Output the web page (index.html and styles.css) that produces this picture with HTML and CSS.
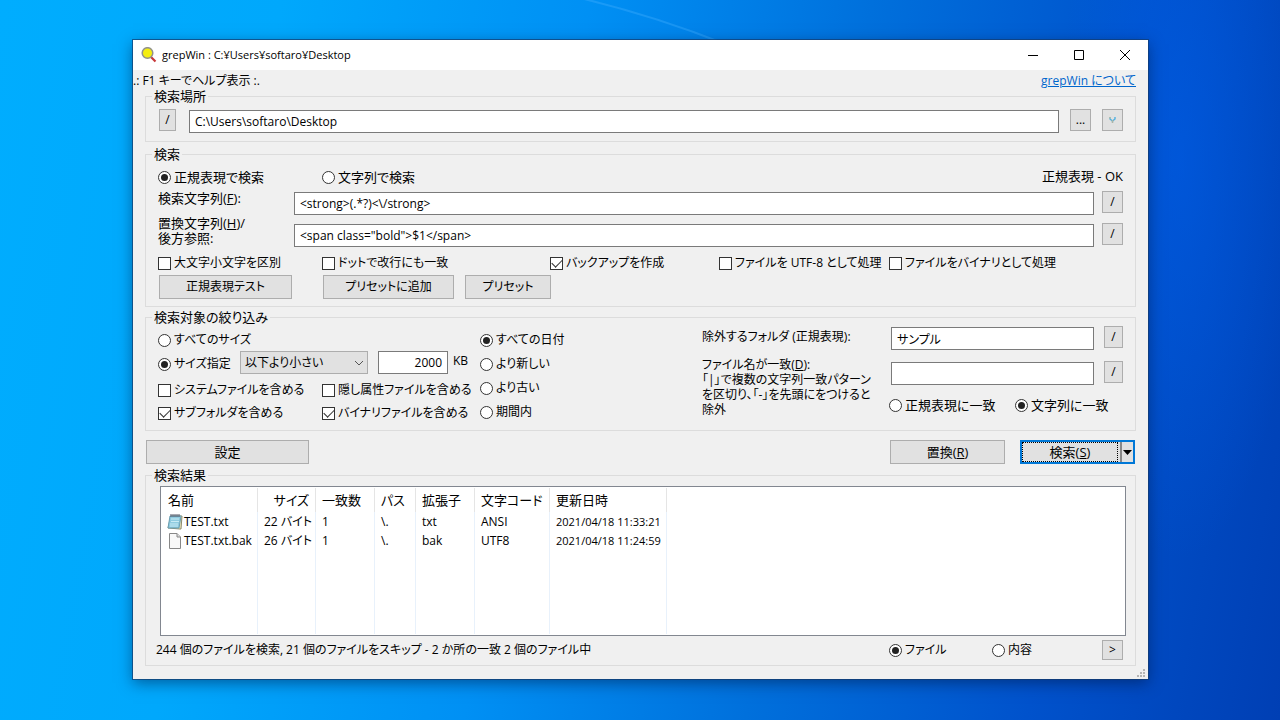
FILE: index.html
```html
<!DOCTYPE html>
<html lang="ja">
<head>
<meta charset="utf-8">
<title>grepWin</title>
<link rel="stylesheet" href="styles.css">
</head>
<body class="desktop">
<svg class="ray" viewBox="0 0 160 50" aria-hidden="true"><path d="M5 -2 Q80 16 150 44" fill="none" stroke="#49b2ff" stroke-opacity=".35" stroke-width="2"/></svg>
<main class="window">
  <header class="titlebar">
    <svg class="app-icon" viewBox="0 0 16 16" aria-hidden="true">
      <path d="M10 10 L14.500 14.500" stroke="#c8393b" stroke-width="2.2"/>
      <circle cx="6.500" cy="6" r="5.300" fill="#f4ee10" stroke="#92928a" stroke-width="1.5"/>
    </svg>
    <h1 class="title">grepWin : C:¥Users¥softaro¥Desktop</h1>
    <button class="caption-btn" type="button" aria-label="最小化"><svg viewBox="0 0 12 12"><path d="M1 6.500H11"/></svg></button>
    <button class="caption-btn" type="button" aria-label="最大化"><svg viewBox="0 0 12 12"><path d="M1.500 1.500H10.500V10.500H1.500Z"/></svg></button>
    <button class="caption-btn" type="button" aria-label="閉じる"><svg viewBox="0 0 12 12"><path d="M1 1L11 11M11 1L1 11"/></svg></button>
  </header>
  <div class="content">
    <div class="help-row"><span>.: F1 キーでヘルプ表示 :.</span><a class="about" href="#about">grepWin について</a></div>

    <fieldset class="group">
      <legend>検索場所</legend>
      <div class="path-row">
        <button class="btn btn-slash" type="button">/</button>
        <input class="text grow" type="text" aria-label="検索場所" value="C:\Users\softaro\Desktop">
        <button class="btn btn-small" type="button">...</button>
        <button class="btn btn-small" type="button" aria-label="履歴"><svg class="fork" viewBox="0 0 7 8"><path d="M1 1V3L3.500 5L6 3V1" fill="none" stroke="#4fb0e0" stroke-width="1.4"/><path d="M3.500 4V7" stroke="#a9b5a9" stroke-width="1.6"/><path d="M1 1V2.500" stroke="#e0b878" stroke-width="1"/></svg></button>
      </div>
    </fieldset>

    <fieldset class="group group-search">
      <legend>検索</legend>
      <div class="mode-row">
        <label class="option"><input type="radio" name="mode" checked>正規表現で検索</label>
        <label class="option"><input type="radio" name="mode">文字列で検索</label>
        <span class="state">正規表現 - OK</span>
      </div>
      <div class="field-row">
        <label class="field-label" for="find">検索文字列(<u>F</u>):</label>
        <input class="text grow" id="find" type="text" value="&lt;strong&gt;(.*?)&lt;\/strong&gt;">
        <button class="btn btn-small" type="button">/</button>
      </div>
      <div class="field-row field-row-tall">
        <label class="field-label" for="repl">置換文字列(<u>H</u>)/<br>後方参照:</label>
        <input class="text grow" id="repl" type="text" value="&lt;span class=&quot;bold&quot;&gt;$1&lt;/span&gt;">
        <button class="btn btn-small" type="button">/</button>
      </div>
      <div class="check-row">
        <label class="option">
          <input type="checkbox">大文字小文字を区別</label>
        <label class="option"><input type="checkbox">ドットで改行にも一致</label>
        <label class="option"><input type="checkbox" checked>バックアップを作成</label>
        <label class="option"><input type="checkbox">ファイルを UTF-8 として処理</label>
        <label class="option"><input type="checkbox">ファイルをバイナリとして処理</label>
      </div>
      <div class="preset-row">
        <button class="btn btn-test" type="button">正規表現テスト</button>
        <button class="btn btn-add" type="button">プリセットに追加</button>
        <button class="btn btn-preset" type="button">プリセット</button>
      </div>
    </fieldset>

    <fieldset class="group group-limit">
      <legend>検索対象の絞り込み</legend>
      <div class="limit">
        <div class="size-col">
          <label class="option"><input type="radio" name="size">すべてのサイズ</label>
          <div class="size-row">
            <label class="option"><input type="radio" name="size" checked>サイズ指定</label>
            <span class="select-box">
              <select class="select" aria-label="サイズ条件"><option>以下より小さい</option></select>
              <svg class="chevron" viewBox="0 0 10 6" aria-hidden="true"><path d="M1 1L5 5L9 1"/></svg>
            </span>
            <input class="text amount" type="text" aria-label="サイズ" value="2000">
            <span class="unit">KB</span>
          </div>
          <div class="include-grid">
            <label class="option"><input type="checkbox">システムファイルを含める</label>
            <label class="option"><input type="checkbox">隠し属性ファイルを含める</label>
            <label class="option"><input type="checkbox" checked>サブフォルダを含める</label>
            <label class="option"><input type="checkbox" checked>バイナリファイルを含める</label>
          </div>
        </div>
        <div class="date-col">
          <label class="option"><input type="radio" name="date" checked>すべての日付</label>
          <label class="option"><input type="radio" name="date">より新しい</label>
          <label class="option"><input type="radio" name="date">より古い</label>
          <label class="option"><input type="radio" name="date">期間内</label>
        </div>
        <div class="pattern-labels">
          <label for="exclude">除外するフォルダ (正規表現):</label>
          <label for="names">ファイル名が一致(<u>D</u>):<br>「|」で複数の文字列一致パターン<br>を区切り、「-」を先頭にをつけると<br>除外</label>
        </div>
        <div class="pattern-fields">
          <div class="pattern-row"><input class="text grow" id="exclude" type="text" value="サンプル"><button class="btn btn-slim" type="button">/</button></div>
          <div class="pattern-row"><input class="text grow" id="names" type="text"><button class="btn btn-slim" type="button">/</button></div>
          <div class="match-row">
            <label class="option"><input type="radio" name="match">正規表現に一致</label>
            <label class="option"><input type="radio" name="match" checked>文字列に一致</label>
          </div>
        </div>
      </div>
    </fieldset>

    <div class="actions">
      <button class="btn btn-settings" type="button">設定</button>
      <button class="btn btn-action" type="button">置換(<u>R</u>)</button>
      <div class="split">
        <button class="split-main" type="button">検索(<u>S</u>)</button>
        <button class="split-drop" type="button" aria-label="検索メニュー"><svg viewBox="0 0 9 5"><path d="M0 0H9L4.500 5Z"/></svg></button>
      </div>
    </div>

    <fieldset class="group group-results">
      <legend>検索結果</legend>
      <div class="list">
        <table class="results">
          <colgroup><col class="c-name"><col class="c-size"><col class="c-count"><col class="c-path"><col class="c-ext"><col class="c-enc"><col class="c-date"><col></colgroup>
          <thead><tr><th>名前</th><th class="num">サイズ</th><th>一致数</th><th>パス</th><th>拡張子</th><th>文字コード</th><th>更新日時</th><th></th></tr></thead>
          <tbody>
            <tr>
              <td><span class="file"><svg class="file-icon" viewBox="0 0 16 16"><path d="M4 2H15L14 15H13L1 14Z" fill="#f0e6b8" stroke="#8d8a6c"/><path d="M3 2H14L12 14H1Z" fill="#8fcbe0" stroke="#6a9fb3"/><path d="M4 5H12M4 7.500H12M3 10H11M3 12H11" stroke="#c8ebf5"/><path d="M4 0V3M6 0V3M8 0V3M10 0V3M12 0V3" stroke="#556"/></svg>TEST.txt</span></td>
              <td class="num">22 バイト</td><td>1</td><td>\.</td><td>txt</td><td>ANSI</td><td class="stamp">2021/04/18 11:33:21</td><td></td>
            </tr>
            <tr>
              <td><span class="file"><svg class="file-icon" viewBox="0 0 16 16"><path d="M2.500.5H10L13.500 4V15.500H2.500Z" fill="#f9f9f9" stroke="#888"/><path d="M10 .5V4H13.500" fill="#ddd" stroke="#888"/></svg>TEST.txt.bak</span></td>
              <td class="num">26 バイト</td><td>1</td><td>\.</td><td>bak</td><td>UTF8</td><td class="stamp">2021/04/18 11:24:59</td><td></td>
            </tr>
            <tr class="filler"><td></td><td></td><td></td><td></td><td></td><td></td><td></td><td></td></tr>
          </tbody>
        </table>
      </div>
      <div class="status-row">
        <span class="status">244 個のファイルを検索, 21 個のファイルをスキップ - 2 か所の一致 2 個のファイル中</span>
        <label class="option view"><input type="radio" name="view" checked>ファイル</label>
        <label class="option view"><input type="radio" name="view">内容</label>
        <button class="btn btn-more" type="button">&gt;</button>
      </div>
    </fieldset>
  </div>
  <svg class="grip" viewBox="0 0 8 8" aria-hidden="true"><path d="M6 0h2v2h-2zM3 3h2v2h-2zM6 3h2v2h-2zM0 6h2v2h-2zM3 6h2v2h-2zM6 6h2v2h-2z"/></svg>
</main>
</body>
</html>
```

FILE: styles.css
```css
* { box-sizing: border-box; }

.desktop {
  margin: 0;
  min-height: 100vh;
  padding: 40px 132px 41px 133px;
  display: flex;
  position: relative;
  color: #000;
  font: 13px/16px "Open Sans", "Noto Sans CJK JP", sans-serif;
  font-feature-settings: "palt";
  white-space: nowrap;
  background:
    radial-gradient(ellipse 120px 400px at 1180px 160px, rgba(0, 95, 235, .5), rgba(0, 95, 235, 0)),
    linear-gradient(100deg, #00adfe 0%, #00a8fc 20%, #0090f4 42%, #0070dc 62%, #0052cc 82%, #003fb4 100%);
}

.ray { position: absolute; left: 575px; top: 0; width: 160px; height: 50px; }

button, input, select { font: inherit; font-feature-settings: inherit; color: inherit; margin: 0; }

.window {
  position: relative;
  flex: 1;
  min-width: 0;
  display: flex;
  flex-direction: column;
  background: #f0f0f0;
  box-shadow: 0 0 0 1px rgba(20, 60, 110, .7), 0 4px 14px rgba(0, 20, 60, .5);
}

.titlebar { display: flex; align-items: center; height: 30px; padding-left: 8px; background: #fff; }
.app-icon { width: 16px; height: 16px; margin-right: 5px; }
.title { flex: 1; margin: 0; font-size: 11px; font-weight: 400; }
.caption-btn { width: 46px; height: 30px; padding: 0; border: 0; background: none; display: grid; place-items: center; }
.caption-btn svg { width: 12px; height: 12px; fill: none; stroke: #000; stroke-width: 1; }

.content { flex: 1; display: flex; flex-direction: column; padding: 4px 12px 13px; }
.help-row { display: flex; justify-content: space-between; height: 14px; margin-left: -12px; font-size: 12px; line-height: 14px; }
.about { color: #0066cc; }

.group { margin: 0 0 4px; padding: 0 12px 8px 13px; border: 1px solid #dcdcdc; min-width: 0; }
.group legend { margin-left: -7px; padding: 0 2px; line-height: 16px; }

.btn { height: 24px; padding: 0; border: 1px solid #adadad; background: #e1e1e1; }
.btn-small, .btn-slash, .btn-slim { flex: none; height: 22px; font-size: 12px; }
.btn-small { width: 21px; }
.btn-slash { width: 17px; }
.btn-slim { width: 19px; }
.fork { width: 7px; height: 8px; }

.text { height: 23px; min-width: 0; margin-top: 1px; padding: 0 5px; border: 1px solid #7a7a7a; background: #fff; font-size: 12px; }
.grow { flex: 1; }

.path-row { display: flex; align-items: flex-start; gap: 11px; padding-top: 5px; }
.path-row .btn-slash { margin-right: 2px; }

.option { display: flex; align-items: center; gap: 3px; height: 18px; }
.option input { appearance: none; flex: none; width: 13px; height: 13px; border: 1px solid #333; background: #fff; display: grid; place-items: center; }
.option input[type="radio"] { border-radius: 50%; }
.option input[type="radio"]:checked::after { content: ""; width: 7px; height: 7px; border-radius: 50%; background: #222; }
.option input[type="checkbox"]:checked::after { content: ""; width: 9px; height: 5px; margin-bottom: 3px; border: solid #333; border-width: 0 0 1px 1px; transform: rotate(-45deg); }

.group-search { padding-bottom: 7px; margin-bottom: 2px; }
.mode-row, .check-row { display: grid; margin-left: -1px; }
.mode-row { grid-template-columns: 164px 228px 1fr; padding-top: 6px; }
.state { justify-self: end; }
.field-row { display: flex; align-items: flex-start; margin: 5px 0 0 -1px; }
.field-row-tall { margin-top: 1px; }
.field-row-tall .text { margin-top: 8px; }
.field-row-tall .btn { margin-top: 7px; }
.field-label { width: 136px; line-height: 15px; }
.field-row .btn { margin-left: 8px; }
.check-row { grid-template-columns: 164px 228px 169px 170px 1fr; padding-top: 7px; font-size: 12px; }
.preset-row { display: flex; padding-top: 3px; font-size: 12px; }
.btn-test { width: 133px; margin-right: 31px; }
.btn-add { width: 131px; margin-right: 11px; }
.btn-preset { width: 86px; }

.limit { display: grid; grid-template-columns: 322px 222px 189px 1fr; margin-left: -1px; }
.size-col { padding-top: 6px; font-size: 12px; }
.size-row { display: flex; align-items: flex-start; height: 30px; padding-top: 2px; }
.size-row .option { width: 82px; margin-top: 4px; }
.select-box { position: relative; width: 128px; margin-right: 10px; }
.select { appearance: none; width: 100%; height: 23px; padding: 0 4px; border: 1px solid #adadad; border-radius: 0; background: #e1e1e1; display: block; }
.chevron { position: absolute; right: 4px; top: 9px; width: 10px; height: 6px; fill: none; stroke: #555; }
.amount { width: 70px; margin-top: 0; text-align: right; }
.unit { margin: 2px 0 0 5px; }
.include-grid { display: grid; grid-template-columns: 164px 1fr; row-gap: 5px; padding-top: 2px; }
.date-col { display: grid; align-content: start; row-gap: 6px; padding-top: 6px; font-size: 12px; }
.pattern-labels { display: grid; align-content: start; row-gap: 13px; padding-top: 4px; font-size: 12px; line-height: 15px; }
.pattern-fields { padding-top: 1px; }
.pattern-row { display: flex; align-items: flex-start; gap: 10px; height: 35px; }
.match-row { display: grid; grid-template-columns: 126px 1fr; margin-left: -2px; }

.actions { display: flex; gap: 15px; padding: 5px 1px 3px; }
.btn-settings { width: 163px; margin-right: auto; }
.btn-action { width: 115px; }
.split { display: flex; width: 115px; height: 24px; border: 2px solid #0078d7; background: #e1e1e1; }
.split-main { flex: 1; padding: 0; border: 1px dotted #000; background: none; }
.split-drop { width: 13px; padding: 0; margin-left: 2px; border: 0; border-left: 2px solid #888; background: none; display: grid; place-items: center; }
.split-drop svg { width: 9px; height: 5px; }

.group-results { flex: 1; margin: 0; padding: 0 9px 4px 14px; }
.group-results legend { margin-left: -8px; }
.list { height: 150px; margin-top: 3px; padding: 1px; border: 1px solid #828790; background: #fff; }
.results { width: 100%; height: 100%; table-layout: fixed; border-collapse: separate; border-spacing: 0; font-size: 12px; }
.results th, .results td { padding: 0 6px; height: 19px; border-right: 1px solid #e8f1fb; text-align: left; font-weight: 400; }
.results th { height: 24px; font-size: 13px; border-right-color: #e5e5e5; }
.results .num { text-align: right; }
.results th:last-child, .results td:last-child { border-right: 0; }
.results .filler td { height: auto; }
.results .stamp { font-size: 11px; }
.c-name { width: 96px; }
.c-size { width: 58px; }
.c-count { width: 59px; }
.c-path { width: 41px; }
.c-ext { width: 59px; }
.c-enc { width: 75px; }
.c-date { width: 117px; }
.file { display: flex; align-items: center; gap: 1px; margin-left: -1px; }
.file-icon { flex: none; width: 16px; height: 16px; }

.status-row { display: flex; align-items: center; height: 24px; margin: 2px 3px 0 -4px; font-size: 12px; }
.status { flex: 1; }
.view { width: 103px; }
.btn-more { width: 21px; height: 20px; margin-left: 7px; line-height: 16px; }
.group-results { padding-bottom: 3px; }
.grip { position: absolute; right: 3px; bottom: 2px; width: 8px; height: 8px; fill: #b5b5b5; }
```
